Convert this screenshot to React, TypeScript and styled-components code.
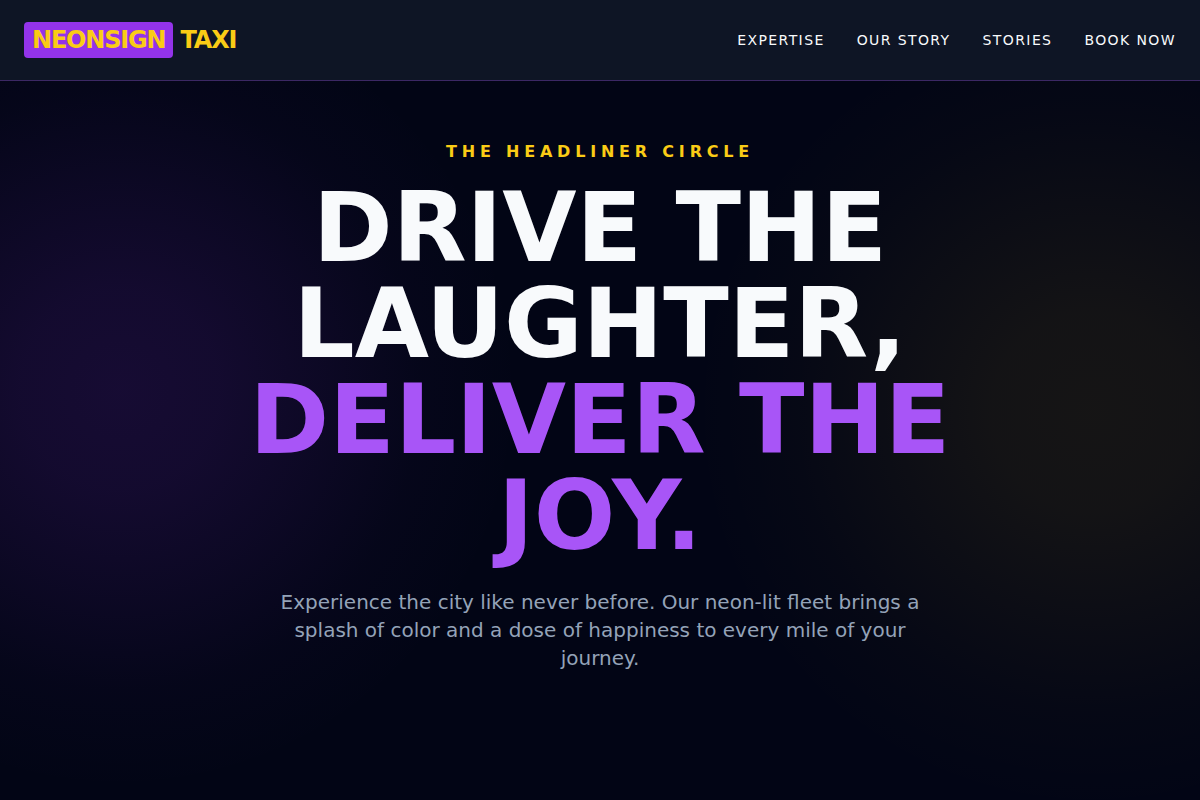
import React from "react";
import styled, { createGlobalStyle } from "styled-components";

const GlobalStyle = createGlobalStyle`
  *, *::before, *::after { box-sizing: border-box; }
  body {
    margin: 0;
    background: #020515;
    color: #f8fafc;
    font-family: "DejaVu Sans", sans-serif;
    overflow-x: hidden;
  }
`;

const Page = styled.div`
  min-height: 100vh;
  display: flex;
  flex-direction: column;
`;

const Header = styled.header`
  display: flex;
  align-items: center;
  justify-content: space-between;
  padding: 24px;
  background: #0e1525;
  border-bottom: 1px solid rgba(168, 85, 247, 0.3);
`;

const Brand = styled.a`
  color: #facc15;
  font-size: 24px;
  line-height: 32px;
  font-weight: 700;
  letter-spacing: -0.05em;
  text-decoration: none;
  white-space: nowrap;
`;

const BrandMark = styled.span`
  padding: 4px 8px;
  border-radius: 4px;
  background: #9333ea;
`;

const Nav = styled.nav`
  display: flex;
  gap: 32px;
`;

const NavLink = styled.a`
  color: #f8fafc;
  font-size: 14px;
  line-height: 20px;
  letter-spacing: 0.1em;
  text-decoration: none;
  text-transform: uppercase;
`;

const Hero = styled.main`
  position: relative;
  z-index: 0;
  overflow: hidden;
  flex: 1;
  display: flex;
  flex-direction: column;
  align-items: center;
  padding: 59px 24px 96px;
  text-align: center;
`;

const Glow = styled.div<{ $side: "left" | "right" }>`
  position: absolute;
  z-index: -1;
  inset: 0;
  background: ${({ $side }) =>
    $side === "left"
      ? "radial-gradient(circle 400px at 10% 43%, rgba(147, 51, 234, 0.14), rgba(147, 51, 234, 0.12) 25%, rgba(147, 51, 234, 0.075) 50%, rgba(147, 51, 234, 0.025) 75%, transparent)"
      : "radial-gradient(circle 400px at 91% 46%, rgba(250, 204, 21, 0.08), rgba(250, 204, 21, 0.07) 25%, rgba(250, 204, 21, 0.042) 50%, rgba(250, 204, 21, 0.014) 75%, transparent)"};
`;

const Eyebrow = styled.p`
  margin: 0 0 16px;
  color: #facc15;
  font-size: 16px;
  line-height: 24px;
  font-weight: 700;
  letter-spacing: 0.3em;
  text-transform: uppercase;
`;

const Title = styled.h1`
  max-width: 896px;
  margin: 0 0 24px;
  font-size: 96px;
  line-height: 96px;
  font-weight: 700;
  text-transform: uppercase;
`;

const Accent = styled.span`
  display: block;
  color: #a855f7;
`;

const Lead = styled.p`
  max-width: 672px;
  margin: 0;
  color: #94a3b8;
  font-size: 20px;
  line-height: 28px;
`;

const links = ["Expertise", "Our Story", "Stories", "Book Now"];

export default function App() {
  return (
    <Page>
      <GlobalStyle />
      <Header>
        <Brand href="#">
          <BrandMark>NEONSIGN</BrandMark> TAXI
        </Brand>
        <Nav aria-label="Main">
          {links.map((label) => (
            <NavLink key={label} href="#">{label}</NavLink>
          ))}
        </Nav>
      </Header>
      <Hero>
        <Glow $side="left" />
        <Glow $side="right" />
        <Eyebrow>The Headliner Circle</Eyebrow>
        <Title>
          Drive the Laughter, <Accent>Deliver the Joy.</Accent>
        </Title>
        <Lead>
          Experience the city like never before. Our neon-lit fleet brings a
          splash of color and a dose of happiness to every mile of your journey.
        </Lead>
      </Hero>
    </Page>
  );
}
